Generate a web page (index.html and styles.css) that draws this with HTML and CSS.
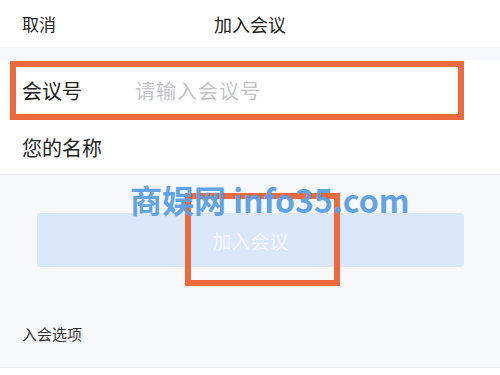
FILE: index.html
```html
<!DOCTYPE html>
<html lang="zh">
<head>
<meta charset="utf-8">
<link rel="stylesheet" href="styles.css">
</head>
<body>
<div class="page">
  <header class="topbar">
    <span class="cancel">取消</span>
    <span class="title">加入会议</span>
    <span></span>
  </header>
  <section class="form">
    <div class="row row-first">
      <span class="label">会议号</span>
      <span class="placeholder">请输入会议号</span>
    </div>
    <div class="row row-second">
      <span class="label">您的名称</span>
    </div>
  </section>
  <section class="actions">
    <div class="btn">加入会议</div>
  </section>
  <div class="options">入会选项</div>
  <div class="bottom"></div>

  <div class="mark mark-row"></div>
  <div class="mark mark-btn"></div>
  <div class="watermark">商娱网 info35.com</div>
</div>
</body>
</html>
```

FILE: styles.css
```css
html, body {
  margin: 0;
  padding: 0;
}
body {
  width: 500px;
  height: 375px;
  overflow: hidden;
  background: #f7f8fa;
  font-family: "Noto Sans CJK SC", "Noto Sans", sans-serif;
  color: #222;
}
.page {
  position: relative;
  width: 500px;
  height: 375px;
  display: flex;
  flex-direction: column;
}
.topbar {
  height: 47px;
  background: #fff;
  display: grid;
  grid-template-columns: 1fr auto 1fr;
  align-items: center;
  padding: 0 22px;
  box-sizing: border-box;
  font-size: 17px;
}
.title {
  font-size: 18px;
}
.form {
  margin-top: 13px;
  background: #fff;
  border-bottom: 1px solid #ececee;
}
.row {
  display: flex;
  align-items: center;
  padding-left: 22px;
  font-size: 20px;
}
.row-first {
  height: 61px;
}
.row-second {
  height: 53px;
}
.label {
  width: 113px;
}
.placeholder {
  color: #c2c4c8;
  letter-spacing: 1px;
}
.actions {
  padding: 38px 36px 0 37px;
}
.btn {
  height: 54px;
  background: #dbe7fb;
  border-radius: 3px;
  display: flex;
  align-items: center;
  justify-content: center;
  color: #f3f7fe;
  font-size: 19px;
}
.options {
  margin-top: 56px;
  padding-left: 22px;
  font-size: 15px;
  color: #333;
}
.bottom {
  margin-top: auto;
  height: 7px;
  background: #fff;
  border-top: 1px solid #ececee;
}
.mark {
  position: absolute;
  border: 6px solid #ee6a3c;
  box-sizing: border-box;
}
.mark-row {
  left: 10px;
  top: 61px;
  width: 454px;
  height: 59px;
}
.mark-btn {
  left: 185px;
  top: 193px;
  width: 155px;
  height: 93px;
}
.watermark {
  position: absolute;
  left: 130px;
  top: 176px;
  font-size: 32px;
  font-weight: 700;
  color: #5a9fe7;
  white-space: nowrap;
  opacity: 0.95;
}
```
